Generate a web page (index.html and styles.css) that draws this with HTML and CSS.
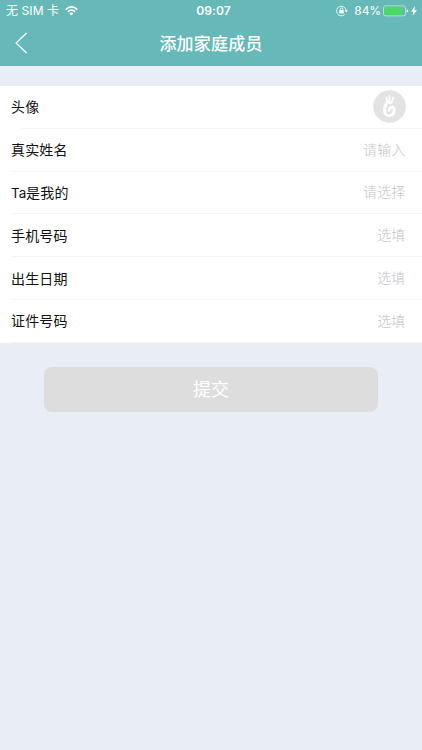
FILE: index.html
```html
<!DOCTYPE html>
<html lang="zh-CN">
<head>
<meta charset="utf-8">
<title>添加家庭成员</title>
<link rel="stylesheet" href="styles.css">
</head>
<body>
<header class="top">
  <div class="status">
    <div class="status-left">
      <span class="carrier">无 SIM 卡</span>
      <svg class="wifi" width="13" height="10" viewBox="0 0 13 10" fill="none" stroke="#fff" stroke-width="1.6">
        <path d="M.7 3.6Q6.5-1.7 12.3 3.6M2.8 5.8Q6.5 2.5 10.2 5.8"/>
        <path d="M4.5 7.4Q6.5 5.8 8.5 7.4L6.5 9.5Z" fill="#fff" stroke="none"/>
      </svg>
    </div>
    <span class="time">09:07</span>
    <div class="status-right">
      <svg class="lock" width="12" height="12" viewBox="0 0 12 12" fill="none" stroke="#fff" stroke-width=".8">
        <path d="M8.8 9.4A4.8 4.8 0 1 1 10.1 5.4"/>
        <path d="M8.5 5.3h3.3L10.2 7.4Z" fill="#fff" stroke="none"/>
        <path d="M3.3 5.1h4.4v3.3H3.3Z" fill="#fff" stroke="none"/>
        <path d="M4.2 5.5V4.1a1.3 1.3 0 0 1 2.6 0v1.4"/>
      </svg>
      <span class="percent">84%</span>
      <svg class="battery" width="26" height="12" viewBox="0 0 26 12">
        <rect x=".5" y=".9" width="22" height="10" rx="2" fill="none" stroke="#fff" stroke-opacity=".75" stroke-width=".7"/>
        <rect x="1.4" y="1.8" width="17.4" height="8.2" rx="1" fill="#4cd964"/>
        <path d="M23.7 4.2q1.5.4 1.5 1.7t-1.5 1.7Z" fill="#fff"/>
      </svg>
      <svg class="bolt" width="6" height="10" viewBox="0 0 6 10"><path d="M3.9.3 0 5.5h2.2L1.6 9.7 6 4.2H3.5Z" fill="#fff"/></svg>
    </div>
  </div>
  <nav class="nav">
    <svg class="back" width="14" height="22" viewBox="0 0 14 22" fill="none" stroke="#fff" stroke-width="1.2"><path d="M12.6 1 2 11l10.6 10"/></svg>
    <h1 class="title">添加家庭成员</h1>
    <span></span>
  </nav>
</header>
<main>
  <div class="form">
    <div class="row row-avatar">
      <span class="label">头像</span>
      <svg class="avatar" width="33" height="33" viewBox="0 0 33 33">
        <circle cx="16.5" cy="16.5" r="16.3" fill="#e3e3e3"/>
        <g fill="none" stroke="#fff" stroke-linecap="round">
          <path d="M14.5 12Q11.3 15.5 11.6 21.5" stroke-width="3"/>
          <path d="M14.6 12 13.2 7.4M16.6 12 16.4 5.9M18.6 12.6 20.3 7.6" stroke-width="1.7"/>
          <path d="M14.3 12.2 18 13" stroke-width="2.2"/>
          <path d="M11.6 21Q12 26 16.5 25.6C21 25 22.2 20.5 20.5 17.2Q16.8 16.6 16 20.4" stroke-width="2.6"/>
        </g>
      </svg>
    </div>
    <div class="row"><span class="label">真实姓名</span><span class="hint">请输入</span></div>
    <div class="row"><span class="label"><span class="latin">Ta</span>是我的</span><span class="hint">请选择</span></div>
    <div class="row"><span class="label">手机号码</span><span class="hint">选填</span></div>
    <div class="row"><span class="label">出生日期</span><span class="hint">选填</span></div>
    <div class="row"><span class="label">证件号码</span><span class="hint">选填</span></div>
  </div>
  <button class="submit" type="button">提交</button>
</main>
</body>
</html>
```
FILE: styles.css
```css
* { box-sizing: border-box; }
body {
  margin: 0;
  min-height: 750px;
  background: #e9eef6;
  font-family: Inter, "Noto Sans CJK SC", sans-serif;
  color: #111;
}
svg { display: block; flex: none; }
.top { height: 66px; background: #66b9b8; color: #fff; }
.status {
  height: 22px;
  padding: 0 5px 0 6px;
  display: grid;
  grid-template-columns: 1fr auto 1fr;
  align-items: center;
  font-size: 12px;
  line-height: 22px;
}
.status-left, .status-right { display: flex; align-items: center; }
.carrier { letter-spacing: .1px; }
.wifi { margin-left: 6px; }
.time { padding-left: 4px; font-size: 12px; font-weight: 600; letter-spacing: .1px; }
.status-right { justify-content: flex-end; }
.percent { margin: 0 2px 0 6px; letter-spacing: -.1px; }
.bolt { margin-left: 2px; }
.nav {
  height: 42px;
  padding: 0 14px;
  display: grid;
  grid-template-columns: 1fr auto 1fr;
  align-items: center;
}
.title { margin: 0; padding-top: 2px; font-size: 17px; font-weight: 500; line-height: 40px; letter-spacing: .2px; }
.form { margin-top: 20px; background: #fff; }
.row {
  height: 42.8px;
  margin-left: 11px;
  padding-right: 16.5px;
  display: flex;
  align-items: center;
  justify-content: space-between;
  border-bottom: 1px solid #f4f4f5;
  font-size: 14px;
  line-height: 20px;
}
.row-avatar {
  padding: 0 16.5px 2px 0;
  border-bottom: 0;
  background: linear-gradient(#f4f4f5, #f4f4f5) 10px 100% / 100% 1px no-repeat;
}
.label { padding-top: 1px; letter-spacing: .15px; }
.latin { font-size: 13.5px; letter-spacing: -.1px; }
.hint { color: #c3c3c9; font-weight: 300; letter-spacing: .15px; }
.submit {
  display: block;
  width: 334px;
  height: 45px;
  margin: 24px 0 0 44px;
  padding: 0;
  border: 0;
  border-radius: 8px;
  background: #ddd;
  color: #fff;
  font: 400 18px/45px Inter, "Noto Sans CJK SC", sans-serif;
}
```
